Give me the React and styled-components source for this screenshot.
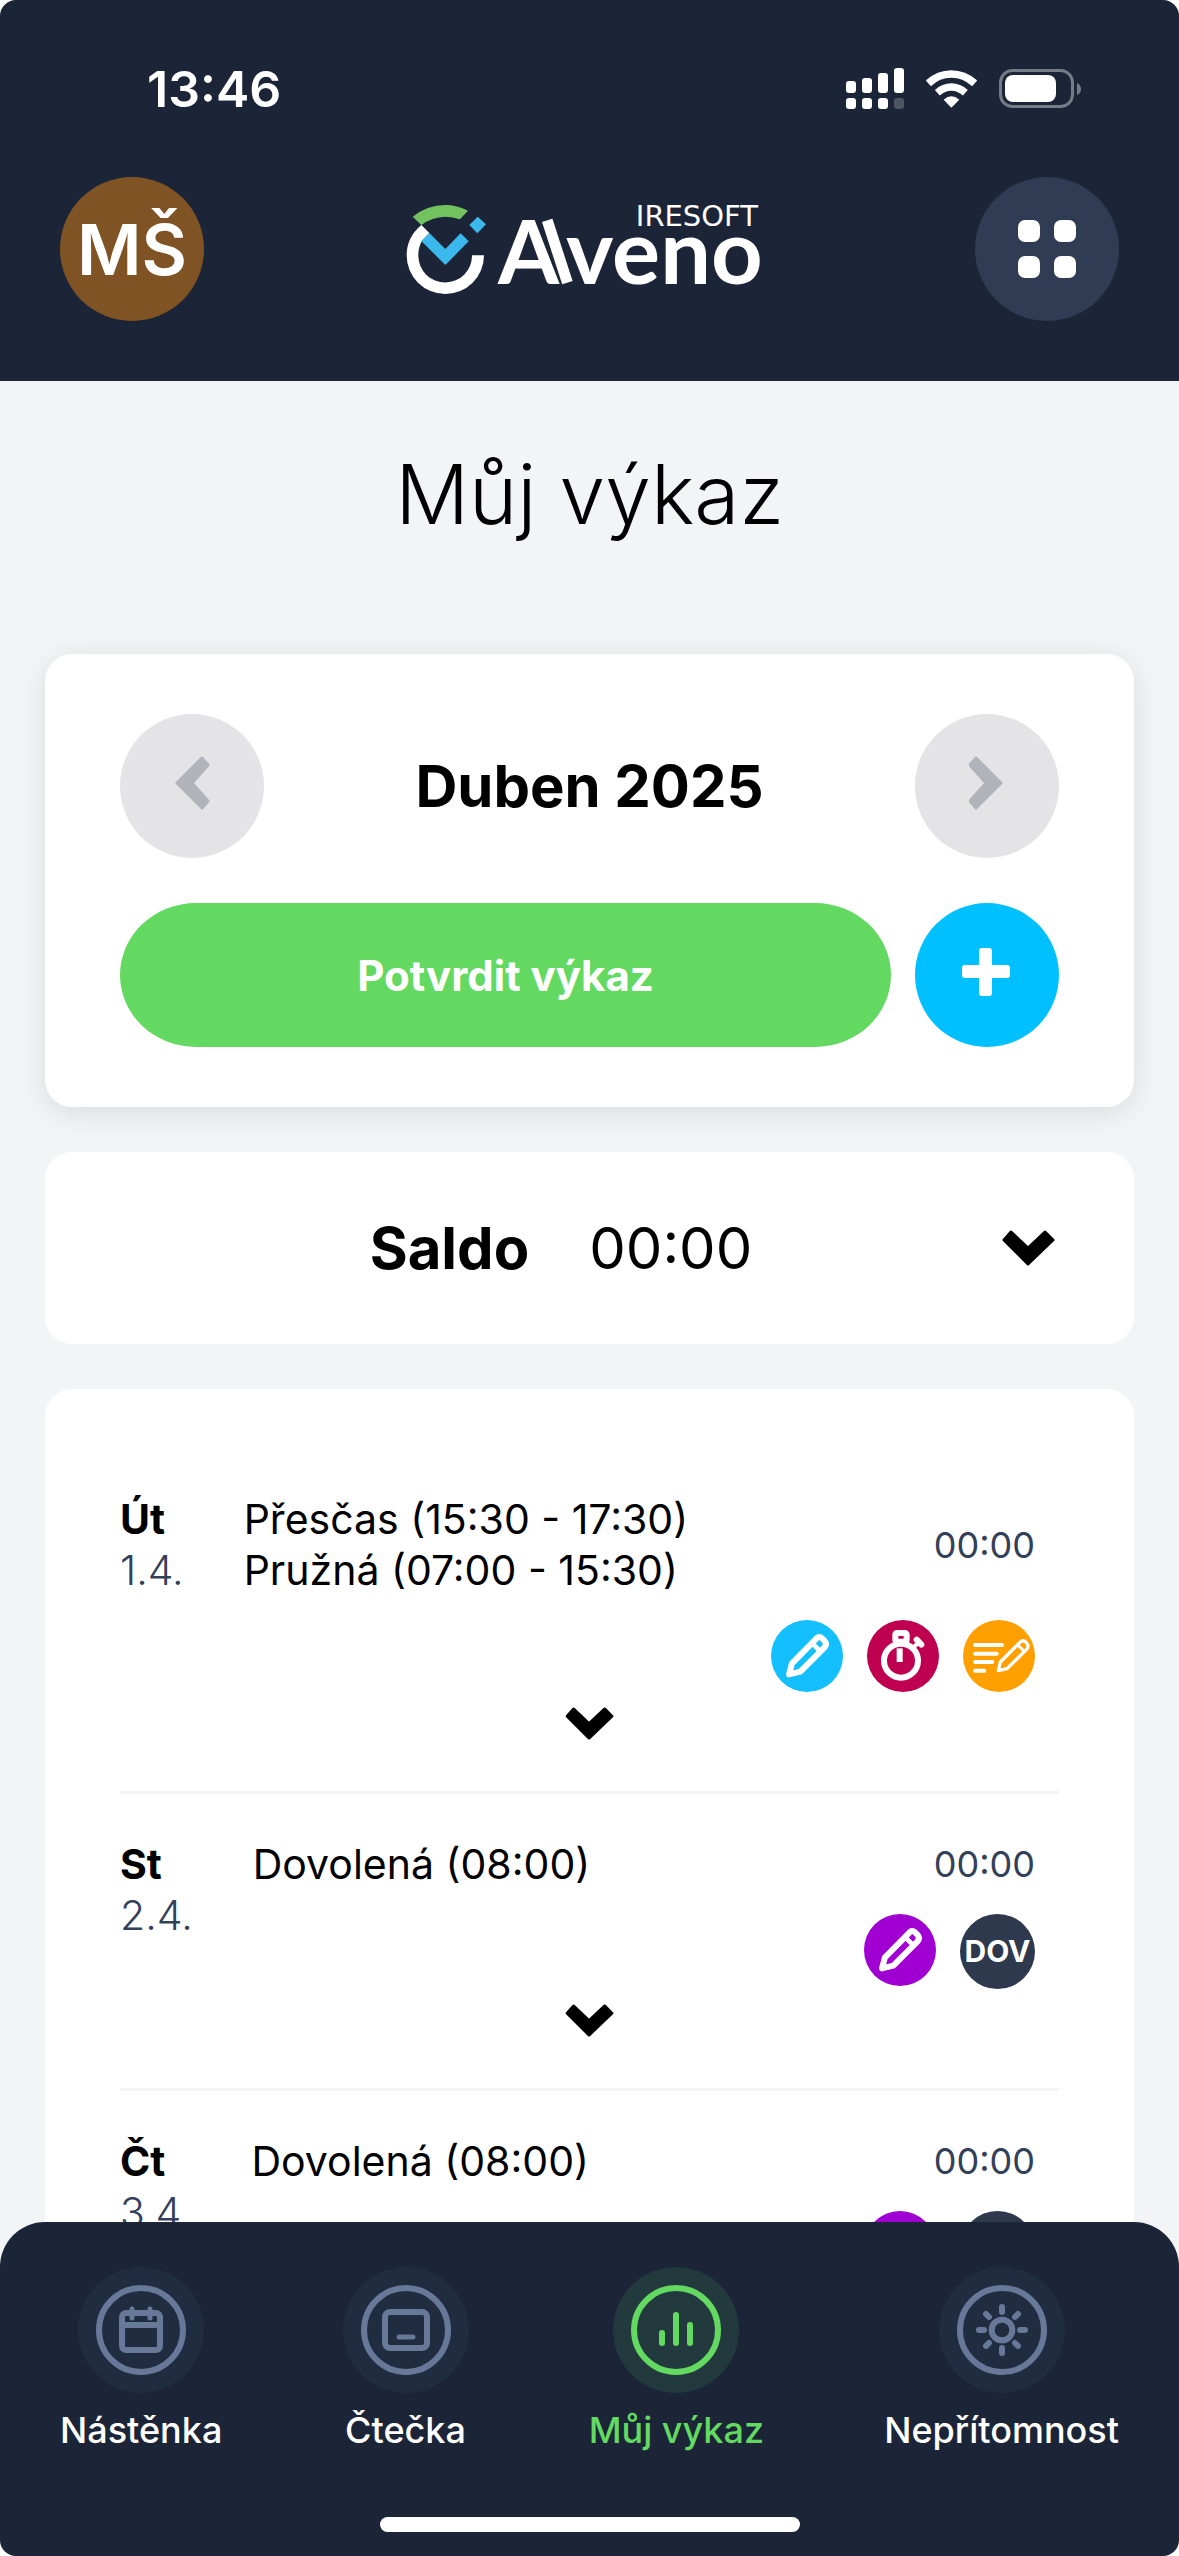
import React from 'react'
import styled, { createGlobalStyle } from 'styled-components'

const navy = '#1b2537'
const navy_light = '#2f3c53'
const slate = '#334059'
const page_grey = '#f3f4f6'
const green = '#63d961'
const blue = '#00c0ff'
const white = '#ffffff'

const GlobalStyle = createGlobalStyle`
    *, *:before, *:after { box-sizing: border-box; }
    body {
        margin: 0;
        background-color: ${white};
        font-family: Inter, "Liberation Sans", sans-serif;
        color: #000;
    }
    button {
        border: 0;
        padding: 0;
        background: none;
        font: inherit;
        color: inherit;
        cursor: pointer;
    }
    h1, h2, p, ul { margin: 0; padding: 0; }
    ul { list-style: none; }
    svg { display: block; }
`

const Screen = styled.div`
    display: flex;
    flex-direction: column;
    height: 100vh;
    overflow: hidden;
    border-radius: 16px;
    background-color: ${page_grey};
`

const Header = styled.header`
    padding-bottom: 60px;
    background-color: ${navy};
    color: ${white};
`

const StatusBar = styled.div`
    display: flex;
    justify-content: space-between;
    align-items: center;
    height: 177px;
    padding: 0 98px 0 147px;
    font-size: 50px;
    font-weight: 600;
`

const StatusIcons = styled.div`
    display: flex;
    align-items: center;
    gap: 22px;
`

const TopBar = styled.div`
    display: flex;
    justify-content: space-between;
    align-items: center;
    padding: 0 60px;
`

const RoundButton = styled.button`
    display: flex;
    justify-content: center;
    align-items: center;
    flex: none;
    width: 144px;
    height: 144px;
    border-radius: 50%;
    background-color: ${props => props.$color};
    font-size: 70px;
    font-weight: 600;
`

const Main = styled.main`
    flex: 1;
    min-height: 0;
    overflow-y: auto;
    scrollbar-width: none;
    padding: 66px 45px 0;
`

const Title = styled.h1`
    padding-bottom: 111px;
    font-size: 82px;
    font-weight: 300;
    line-height: 96px;
    text-align: center;
`

const Card = styled.section`
    margin-bottom: 45px;
    padding: ${props => props.$padding};
    border-radius: 27px;
    background-color: ${white};
    box-shadow: ${props => props.$raised ? '0 6px 30px rgba(0, 0, 0, 0.1)' : 'none'};
`

const CardRow = styled.div`
    display: flex;
    justify-content: space-between;
    align-items: center;
    gap: 24px;
    & + & { margin-top: 45px; }
`

const Month = styled.h2`
    font-size: 58px;
    font-weight: 700;
`

const ConfirmButton = styled.button`
    flex: 1;
    height: 144px;
    border-radius: 76px / 72px;
    background-color: ${green};
    color: ${white};
    font-size: 42px;
    font-weight: 700;
`

const SaldoButton = styled.button`
    display: flex;
    align-items: center;
    width: 100%;
    height: 192px;
    font-size: 58px;
`

const SaldoText = styled.span`
    display: flex;
    justify-content: center;
    flex: 1;
    gap: 60px;
    font-weight: 400;
    b { font-weight: 700; }
`

const Day = styled.li`
    padding-top: 45px;
    border-bottom: 3px solid ${page_grey};
`

const DayGrid = styled.div`
    display: grid;
    grid-template-columns: auto 1fr auto;
    column-gap: 60px;
    padding-right: 24px;
    font-size: 41px;
    line-height: 51px;
`

const DayDate = styled.div`
    grid-row: 1 / 3;
    font-weight: 300;
    color: ${slate};
    b {
        display: block;
        font-weight: 700;
        color: #000;
    }
`

const Time = styled.p`
    align-self: center;
    font-size: 36px;
    color: ${slate};
`

const Badges = styled.div`
    grid-column: 2 / 4;
    display: flex;
    justify-content: flex-end;
    align-items: flex-start;
    gap: 24px;
    padding-top: 24px;
`

const Badge = styled.span`
    display: flex;
    justify-content: center;
    align-items: center;
    width: ${props => props.$size}px;
    height: ${props => props.$size}px;
    border-radius: 50%;
    background-color: ${props => props.$color};
    color: ${white};
    font-size: 30px;
    font-weight: 700;
`

const ExpandButton = styled.button`
    display: flex;
    justify-content: center;
    width: 100%;
    padding: 15px 0 51px;
`

const Nav = styled.nav`
    border-radius: 45px 45px 0 0;
    padding: 45px 60px 24px;
    background-color: ${navy};
`

const NavItems = styled.div`
    display: flex;
    justify-content: space-between;
`

const NavLink = styled.a`
    display: flex;
    flex-direction: column;
    align-items: center;
    gap: 15px;
    font-size: 36px;
    font-weight: 500;
    line-height: 45px;
    text-decoration: none;
    color: ${props => props.$active ? green : white};
`

const NavIcon = styled.svg`
    width: 126px;
    height: 126px;
    border-radius: 50%;
    background-color: ${props => props.$active ? '#22393d' : '#202c3f'};
    fill: none;
    stroke: ${props => props.$active ? green : '#677898'};
    stroke-width: 6;
    stroke-linecap: round;
    stroke-linejoin: round;
`

const HomeIndicator = styled.div`
    width: 420px;
    max-width: 50%;
    height: 15px;
    margin: 64px auto 0;
    border-radius: 8px;
    background-color: ${white};
`

function Signal() {
    return (
        <svg width="58" height="41" viewBox="0 0 58 41" fill={white}>
            <rect x="0" y="13" width="10" height="12" rx="3" />
            <rect x="16" y="10" width="10" height="15" rx="3" />
            <rect x="32" y="5" width="10" height="20" rx="3" />
            <rect x="48" y="0" width="10" height="25" rx="3" />
            <rect x="0" y="30" width="10" height="11" rx="3" />
            <rect x="16" y="30" width="10" height="11" rx="3" />
            <rect x="32" y="30" width="10" height="11" rx="3" />
            <rect x="48" y="30" width="10" height="11" rx="3" opacity="0.22" />
        </svg>
    )
}

function Wifi() {
    return (
        <svg width="51" height="38" viewBox="0 0 153 114" fill="none" stroke={white}>
            <path d="M7 40 Q37 12 76 12 Q115 12 146 40" strokeWidth="23" />
            <path d="M34 68 Q53 51 76 51 Q99 51 118 68" strokeWidth="22" />
            <path d="M53 89 Q76 69 100 89 L76 113Z" fill={white} stroke="none" />
        </svg>
    )
}

function Battery() {
    return (
        <svg width="82" height="39" viewBox="0 0 82 39">
            <rect x="1.5" y="1.5" width="72" height="36" rx="12" fill="none" stroke="#747c87" strokeWidth="3" />
            <rect x="6" y="6" width="51" height="27" rx="8" fill={white} />
            <path d="M78 14 Q82 16 82 20 Q82 24 78 26Z" fill="#747c87" />
        </svg>
    )
}

function Logo() {
    return (
        <svg width="400" height="144" viewBox="10 -3 400 144" role="img" aria-label="IRESOFT Alveno">
            <g transform="scale(0.33333)">
                <path fill="#72c25f" d="M98 110 Q142 75 196 75 Q232 75 264 92 L240 118 Q218 110 196 110 Q156 111 124 135Z" />
                <path fill={white} d="M124 135 L148 159 L126 182 Q114 203 115 228 A80.5 80.5 0 0 0 276 226 L312 226 A116 116 0 0 1 80 226 Q80 172 124 135Z" />
                <path fill="#3cb9ec" d="M148 159 L196 207 L242 160 L266 184 L196 255 L124 183Z M293 110 L318 133 L292 160 L268 135Z" />
            </g>
            <text y="104" fill={white} fontFamily="Lato, sans-serif" fontSize="88" fontWeight="700">
                <tspan x="118">A</tspan>
                <tspan x="177" y="106" rotate="-18">l</tspan>
                <tspan x="186" y="104" fontSize="90">veno</tspan>
            </text>
            <text x="378" y="46" textAnchor="end" fill={white} fontFamily="DejaVu Sans" fontSize="29">IRESOFT</text>
        </svg>
    )
}

function GridIcon() {
    return (
        <svg width="58" height="58" viewBox="0 0 58 58" fill={white}>
            <rect x="0" y="0" width="22" height="22" rx="7" />
            <rect x="36" y="0" width="22" height="22" rx="7" />
            <rect x="0" y="36" width="22" height="22" rx="7" />
            <rect x="36" y="36" width="22" height="22" rx="7" />
        </svg>
    )
}

function ChevronSide({ right }) {
    return (
        <svg width="36" height="60" viewBox="0 0 36 60" fill="#b1b3ba" stroke="#b1b3ba" strokeWidth="3" strokeLinejoin="round">
            {right
                ? <path d="M7 2 L1 9 L17 27 L1 45 L7 52 L32 27Z" />
                : <path d="M28 2 L34 9 L18 27 L34 45 L28 52 L3 27Z" />}
        </svg>
    )
}

function ChevronDown({ width, height }) {
    return (
        <svg width={width} height={height} viewBox="0 0 54 36" stroke="#000" strokeWidth="3" strokeLinejoin="round">
            <path d="M9 2 L26 18 L43 2 L51 10 L26 34 L2 10Z" />
        </svg>
    )
}

function PlusIcon() {
    return (
        <svg width="51" height="56" viewBox="0 0 51 56" fill={white}>
            <rect x="17" y="1" width="13" height="48" rx="3" />
            <rect x="0" y="18" width="48" height="13" rx="3" />
        </svg>
    )
}

function PencilIcon() {
    return (
        <svg width="72" height="72" viewBox="0 0 216 216" fill="none" stroke={white} strokeWidth="18" strokeLinejoin="round">
            <path d="M54 163 L63 130 L134 58 Q143 46 153 55 L160 62 Q170 72 160 83 L88 155Z" />
            <path d="M124 70 L147 93" strokeWidth="14" />
        </svg>
    )
}

function StopwatchIcon() {
    return (
        <svg width="72" height="72" viewBox="0 0 216 216" fill="none" stroke={white} strokeWidth="18">
            <circle cx="102" cy="122" r="51" />
            <rect x="85" y="39" width="34" height="26" rx="5" />
            <path d="M149 59 L163 74" strokeLinecap="round" />
            <path d="M156 66 L138 84" strokeWidth="12" />
            <path d="M98 85 V126" />
        </svg>
    )
}

function NoteIcon() {
    return (
        <svg width="72" height="72" viewBox="0 0 216 216" fill="none" stroke={white} strokeWidth="12" strokeLinecap="round" strokeLinejoin="round">
            <path d="M36 75 H117 M36 101 H101 M36 126 H88 M36 152 H64" />
            <path strokeWidth="10" d="M106 152 L112 126 L169 69 Q179 57 188 66 L191 69 Q200 79 190 89 L132 146Z" />
            <path strokeWidth="9" d="M164 75 L184 94" />
        </svg>
    )
}

const badgeTypes = {
    edit: { color: '#14bfff', size: 72, content: <PencilIcon /> },
    overtime: { color: '#bf0050', size: 72, content: <StopwatchIcon /> },
    note: { color: '#ffa000', size: 72, content: <NoteIcon /> },
    request: { color: '#a000d2', size: 72, content: <PencilIcon /> },
    dov: { color: '#2e394d', size: 75, content: 'DOV' },
}

const days = [
    { name: 'Út', date: '1.4.', items: ['Přesčas (15:30 - 17:30)', 'Pružná (07:00 - 15:30)'], time: '00:00', badges: ['edit', 'overtime', 'note'] },
    { name: 'St', date: '2.4.', items: ['Dovolená (08:00)'], time: '00:00', badges: ['request', 'dov'] },
    { name: 'Čt', date: '3.4.', items: ['Dovolená (08:00)'], time: '00:00', badges: ['request', 'dov'] },
]

const navItems = [
    {
        label: 'Nástěnka',
        icon: <>
            <rect x="44" y="46" width="38" height="37" rx="4" />
            <path d="M45 58 H81" />
            <path d="M54 42 V51 M72 42 V51" strokeWidth="5" />
        </>,
    },
    {
        label: 'Čtečka',
        icon: <>
            <rect x="42" y="45" width="42" height="36" rx="5" />
            <path d="M56 70 H70" strokeWidth="5" />
        </>,
    },
    {
        label: 'Můj výkaz',
        active: true,
        icon: <path d="M49 66 V76 M63 48 V76 M77 58 V76" />,
    },
    {
        label: 'Nepřítomnost',
        icon: <>
            <circle cx="63" cy="63" r="10.3" />
            <path d="M63 40 V45 M63 81 V86 M40 63 H45 M81 63 H86 M47 47 L50 50 M76 76 L79 79 M47 79 L50 76 M76 50 L79 47" />
        </>,
    },
]

export default function App() {
    return (
        <Screen>
            <GlobalStyle />
            <Header>
                <StatusBar>
                    <span>13:46</span>
                    <StatusIcons>
                        <Signal />
                        <Wifi />
                        <Battery />
                    </StatusIcons>
                </StatusBar>
                <TopBar>
                    <RoundButton $color="#7f5323">MŠ</RoundButton>
                    <Logo />
                    <RoundButton $color={navy_light} aria-label="Menu"><GridIcon /></RoundButton>
                </TopBar>
            </Header>
            <Main>
                <Title>Můj výkaz</Title>
                <Card $padding="60px 75px" $raised>
                    <CardRow>
                        <RoundButton $color="#e4e4e6" aria-label="Předchozí měsíc"><ChevronSide /></RoundButton>
                        <Month>Duben 2025</Month>
                        <RoundButton $color="#e4e4e6" aria-label="Další měsíc"><ChevronSide right /></RoundButton>
                    </CardRow>
                    <CardRow>
                        <ConfirmButton>Potvrdit výkaz</ConfirmButton>
                        <RoundButton $color={blue} aria-label="Přidat"><PlusIcon /></RoundButton>
                    </CardRow>
                </Card>
                <Card $padding="0 78px 0 75px">
                    <SaldoButton>
                        <SaldoText><b>Saldo</b><span>00:00</span></SaldoText>
                        <ChevronDown width={54} height={36} />
                    </SaldoButton>
                </Card>
                <Card as="ul" $padding="60px 75px">
                    {
                        days.map(({ name, date, items, time, badges }) => (
                            <Day key={date}>
                                <DayGrid>
                                    <DayDate><b>{name}</b>{date}</DayDate>
                                    <div>{items.map(item => <p key={item}>{item}</p>)}</div>
                                    <Time>{time}</Time>
                                    <Badges>
                                        {badges.map(type => (
                                            <Badge key={type} $color={badgeTypes[type].color} $size={badgeTypes[type].size}>
                                                {badgeTypes[type].content}
                                            </Badge>
                                        ))}
                                    </Badges>
                                </DayGrid>
                                <ExpandButton aria-label="Rozbalit den"><ChevronDown width={50} height={33} /></ExpandButton>
                            </Day>
                        ))
                    }
                </Card>
            </Main>
            <Nav>
                <NavItems>
                    {
                        navItems.map(({ label, icon, active }) => (
                            <NavLink key={label} href="#" $active={active}>
                                <NavIcon viewBox="0 0 126 126" $active={active}>
                                    <circle cx="63" cy="63" r="42" />
                                    {icon}
                                </NavIcon>
                                {label}
                            </NavLink>
                        ))
                    }
                </NavItems>
                <HomeIndicator />
            </Nav>
        </Screen>
    )
}
